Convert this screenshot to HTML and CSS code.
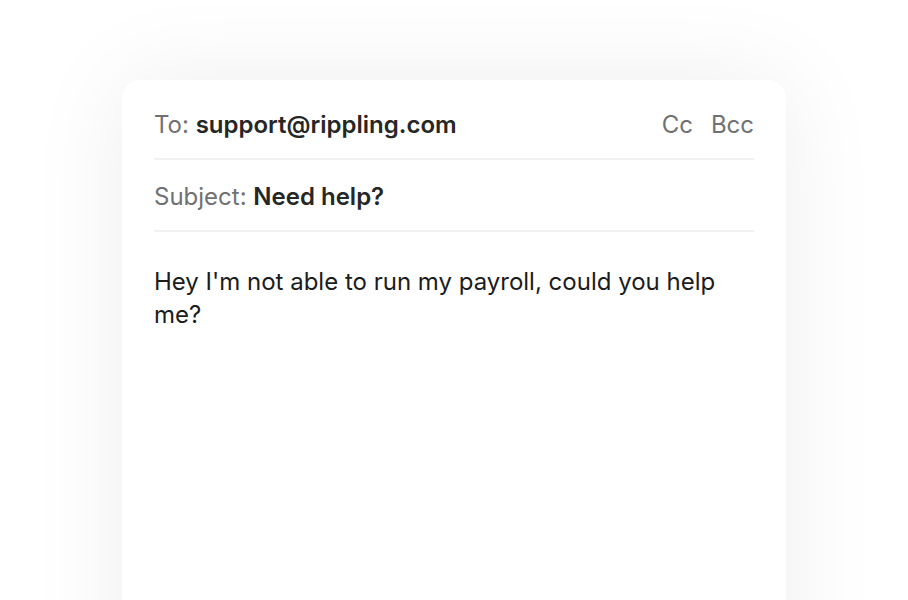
FILE: index.html
```html
<!DOCTYPE html>
<html lang="en">
<head>
    <meta charset="UTF-8">
    <title>New message</title>
    <link rel="stylesheet" href="styles.css">
</head>
<body>
    <div class="stage">
        <div class="mail-card">
            <!-- Recipient row -->
            <div class="mail-row">
                <div class="field">
                    <span class="label">To:</span>
                    <span class="value">support@rippling.com</span>
                </div>
                <div class="extras">
                    <span>Cc</span>
                    <span>Bcc</span>
                </div>
            </div>

            <!-- Subject row -->
            <div class="mail-row">
                <div class="field">
                    <span class="label">Subject:</span>
                    <span class="value">Need help?</span>
                </div>
            </div>

            <!-- Message body -->
            <p class="mail-body">Hey I'm not able to run my payroll, could you help me?</p>
        </div>
    </div>
</body>
</html>
```

FILE: styles.css
```css
/* Page */
body {
    margin: 0;
    background-color: #fff;
    font-family: Inter, "Noto Sans", sans-serif;
    overflow: hidden;
}

.stage {
    height: 600px;
    padding: 80px 122px 0;
    box-sizing: border-box;
}

/* Card */
.mail-card {
    background-color: #fff;
    border-radius: 18px;
    padding: 8px 32px 0;
    height: 700px;
    box-shadow: 0 0 100px rgba(0, 0, 0, 0.07);
}

.mail-row {
    display: flex;
    justify-content: space-between;
    align-items: center;
    padding: 21px 0 17px;
    line-height: 32px;
    font-size: 24px;
    border-bottom: 2px solid #f2f2f2;
}

.field .label {
    color: #717171;
}

.field .value {
    color: #262626;
    font-weight: 600;
}

.extras {
    display: flex;
    gap: 18px;
    color: #717171;
}

.mail-body {
    margin: 33px 0 0;
    font-size: 24px;
    line-height: 33px;
    color: #1c1c1c;
}
```
